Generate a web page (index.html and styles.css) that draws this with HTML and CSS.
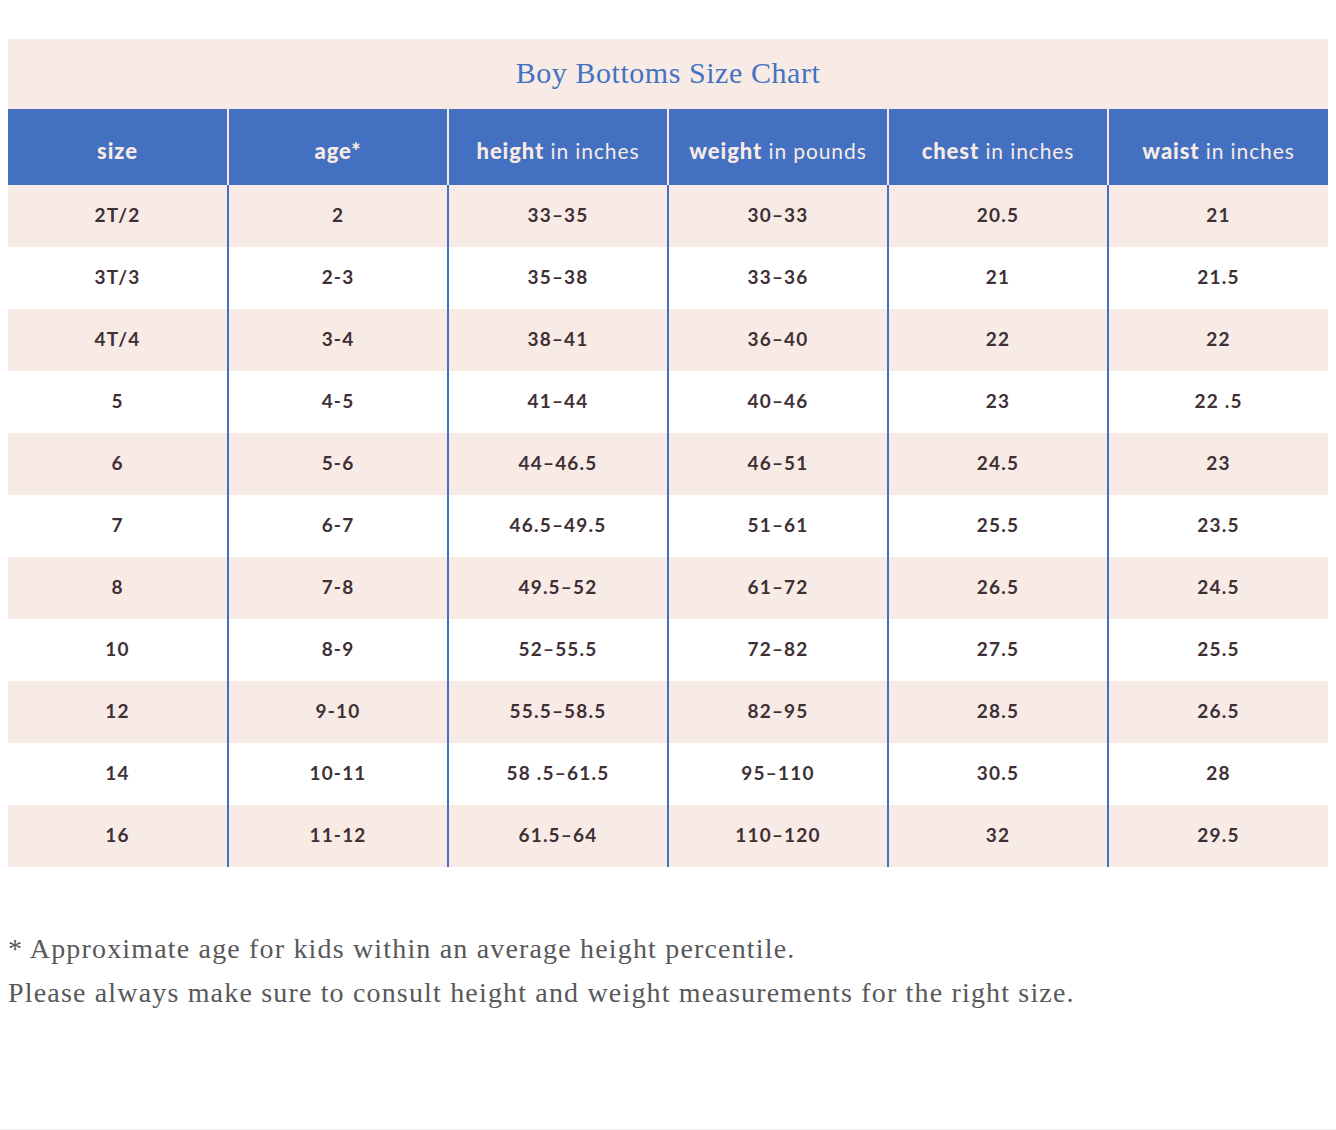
FILE: index.html
```html
<!DOCTYPE html>
<html lang="en">
<head>
<meta charset="utf-8">
<title>Boy Bottoms Size Chart</title>
<link rel="stylesheet" href="styles.css">
</head>
<body>
<div class="page">
  <table class="chart">
    <colgroup>
      <col class="col"><col class="col"><col class="col"><col class="col"><col class="col"><col class="col">
    </colgroup>
    <thead>
      <tr class="title-row"><th colspan="6" class="title">Boy Bottoms Size Chart</th></tr>
      <tr class="head-row">
        <th><b>size</b></th>
        <th><b>age*</b></th>
        <th><b>height</b> <span class="unit">in inches</span></th>
        <th><b>weight</b> <span class="unit">in pounds</span></th>
        <th><b>chest</b> <span class="unit">in inches</span></th>
        <th><b>waist</b> <span class="unit">in inches</span></th>
      </tr>
    </thead>
    <tbody>
      <tr><td>2T/2</td><td>2</td><td>33–35</td><td>30–33</td><td>20.5</td><td>21</td></tr>
      <tr><td>3T/3</td><td>2-3</td><td>35–38</td><td>33–36</td><td>21</td><td>21.5</td></tr>
      <tr><td>4T/4</td><td>3-4</td><td>38–41</td><td>36–40</td><td>22</td><td>22</td></tr>
      <tr><td>5</td><td>4-5</td><td>41–44</td><td>40–46</td><td>23</td><td>22 .5</td></tr>
      <tr><td>6</td><td>5-6</td><td>44–46.5</td><td>46–51</td><td>24.5</td><td>23</td></tr>
      <tr><td>7</td><td>6-7</td><td>46.5–49.5</td><td>51–61</td><td>25.5</td><td>23.5</td></tr>
      <tr><td>8</td><td>7-8</td><td>49.5–52</td><td>61–72</td><td>26.5</td><td>24.5</td></tr>
      <tr><td>10</td><td>8-9</td><td>52–55.5</td><td>72–82</td><td>27.5</td><td>25.5</td></tr>
      <tr><td>12</td><td>9-10</td><td>55.5–58.5</td><td>82–95</td><td>28.5</td><td>26.5</td></tr>
      <tr><td>14</td><td>10-11</td><td>58 .5–61.5</td><td>95–110</td><td>30.5</td><td>28</td></tr>
      <tr><td>16</td><td>11-12</td><td>61.5–64</td><td>110–120</td><td>32</td><td>29.5</td></tr>
    </tbody>
  </table>
  <p class="note">* Approximate age for kids within an average height percentile.<br>Please always make sure to consult height and weight measurements for the right size.</p>
</div>
</body>
</html>
```
FILE: styles.css
```css
html, body {
  margin: 0;
  padding: 0;
  background: #ffffff;
}

.page {
  box-sizing: border-box;
  min-height: 1130px;
  padding: 39px 8px 0;
  border-bottom: 1px solid #efefef;
}

.chart {
  width: 1320px;
  border-collapse: collapse;
  table-layout: fixed;
  font-family: "Lato", "Liberation Sans", sans-serif;
}

.col {
  width: 220px;
}

.title {
  height: 68px;
  padding: 0 0 2px;
  background: #f8ebe6;
  color: #4472c4;
  font-family: "Liberation Serif", serif;
  font-weight: normal;
  font-size: 30px;
  letter-spacing: 0.55px;
  text-align: center;
  vertical-align: middle;
}

.head-row th {
  height: 69px;
  padding: 7px 0 0;
  background: #4370c1;
  color: #f8ebe6;
  font-size: 22px;
  font-weight: 700;
  letter-spacing: 0.9px;
  text-align: center;
  vertical-align: middle;
  border-left: 2px solid #f8ebe6;
}

.head-row th:first-child {
  border-left: none;
}

.head-row b {
  font-weight: 900;
}

.unit {
  font-weight: 400;
  font-size: 21px;
}

tbody td {
  height: 59px;
  padding: 0 0 3px;
  text-align: center;
  vertical-align: middle;
  color: #3e3035;
  font-size: 19px;
  font-weight: 700;
  letter-spacing: 1.2px;
  border-left: 2px solid #4370c1;
}

tbody td:first-child {
  border-left: none;
}

tbody tr:nth-child(odd) {
  background: #f8ebe6;
}

tbody tr:nth-child(even) {
  background: #ffffff;
}

.note {
  margin: 60px 0 0;
  font-family: "Liberation Serif", serif;
  font-size: 28px;
  letter-spacing: 1.17px;
  line-height: 44px;
  color: #58585a;
}
```
